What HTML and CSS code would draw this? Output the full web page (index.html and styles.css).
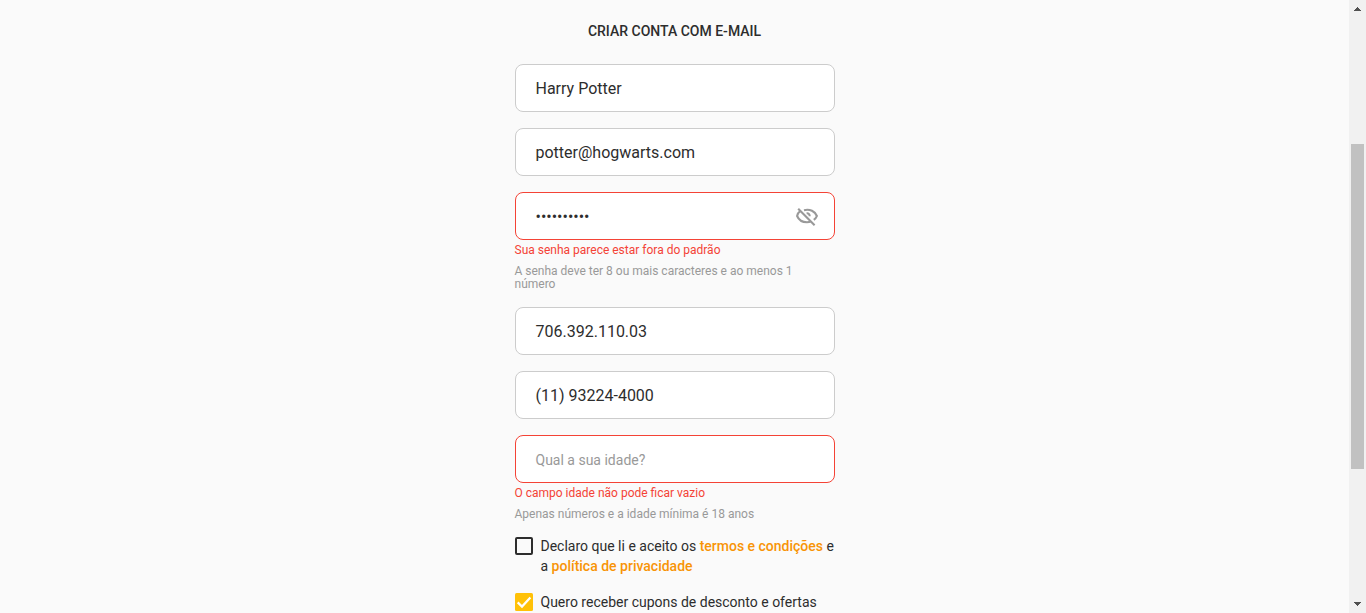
FILE: index.html
```html
<!DOCTYPE html>
<html lang="pt-BR">
<head>
<meta charset="utf-8">
<title>Criar conta</title>
<link rel="stylesheet" href="styles.css">
</head>
<body>
<main class="page">
  <form class="form">
    <h1 class="title">CRIAR CONTA COM E-MAIL</h1>
    <div class="field"><span class="value">Harry Potter</span></div>
    <div class="field"><span class="value">potter@hogwarts.com</span></div>
    <div class="field field-error">
      <span class="value">••••••••••</span>
      <svg class="eye" viewBox="0 0 24 24" width="24" height="24"><path d="M5.2 7.2C3.6 8.4 2.5 10 2.1 12 3.7 15.8 7.5 18.2 12 18.2c1.4 0 2.7-.2 3.9-.7M9 6.2c5.9-1.5 11.1 1.2 12.9 5.8-.6 1.6-1.7 2.9-3.1 3.9M3.2 4.8 19.6 21.2M11.6 9.3c1.9-.2 3.1 1 3.1 2.9"/></svg>
    </div>
    <p class="error">Sua senha parece estar fora do padrão</p>
    <p class="hint">A senha deve ter 8 ou mais caracteres e ao menos 1 número</p>
    <div class="field"><span class="value">706.392.110.03</span></div>
    <div class="field"><span class="value">(11) 93224-4000</span></div>
    <div class="field field-error"><span class="placeholder">Qual a sua idade?</span></div>
    <p class="error">O campo idade não pode ficar vazio</p>
    <p class="hint hint-last">Apenas números e a idade mínima é 18 anos</p>
    <div class="check-row">
      <svg class="box" viewBox="0 0 18 18" width="18" height="18"><rect x="1" y="1" width="16" height="16" rx="1" fill="none" stroke="#2d2d2d" stroke-width="2"/></svg>
      <span>Declaro que li e aceito os <a class="link">termos e condições</a> e a <a class="link">política de privacidade</a></span>
    </div>
    <div class="check-row">
      <svg class="box" viewBox="0 0 18 18" width="18" height="18"><rect width="18" height="18" rx="1.5" fill="#ffc107"/><path d="M2.7 9.4 7 13.6 15.4 4.6" fill="none" stroke="#fff" stroke-width="2.2"/></svg>
      <span>Quero receber cupons de desconto e ofertas</span>
    </div>
  </form>
</main>
<aside class="scrollbar">
  <svg class="arrow" viewBox="0 0 7 4" width="7" height="4"><path d="M3 0h1v1h1v1h1v1h1v1H0V3h1V2h1V1h1z"/></svg>
  <div class="thumb"></div>
  <svg class="arrow" viewBox="0 0 7 4" width="7" height="4"><path d="M0 0h7v1H6v1H5v1H4v1H3V3H2V2H1V1H0z"/></svg>
</aside>
</body>
</html>
```
FILE: styles.css
```css
* { box-sizing: border-box; }
body {
  margin: 0;
  height: 613px;
  overflow: hidden;
  display: flex;
  background: #fafafa;
  color: #2d2d2d;
  font-family: Roboto, "Liberation Sans", sans-serif;
  font-size: 14px;
}
.page { flex: 1; height: 613px; overflow: hidden; }
.form { width: 320px; margin: 0 auto; padding-top: 21px; }
.title {
  margin: 0 0 23px;
  font-size: 14px;
  line-height: 20px;
  font-weight: 500;
  text-align: center;
}
.field {
  display: flex;
  align-items: center;
  justify-content: space-between;
  height: 48px;
  margin-bottom: 16px;
  padding: 0 15px 0 20px;
  border: 1px solid #ccc;
  border-radius: 8px;
  background: #fff;
}
.field-error { margin-bottom: 0; border-color: #f44336; }
.value { padding-top: 2px; font-size: 16px; line-height: 20px; }
.placeholder { padding-top: 2px; color: #999; line-height: 20px; }
.eye { fill: none; stroke: #999; stroke-width: 2.1; }
.error { margin: 4px 0 8px; font-size: 12px; line-height: 13px; color: #f44336; }
.hint { margin: 0 0 16px; padding-right: 30px; font-size: 12px; line-height: 13px; color: #999; }
.hint-last { margin-bottom: 15px; }
.check-row { display: flex; gap: 8px; margin-bottom: 16px; line-height: 20px; }
.box { flex: none; margin-top: 1px; }
.link { color: #f89406; font-weight: 500; }
.scrollbar {
  width: 17px;
  height: 613px;
  padding: 7px 2px;
  display: flex;
  flex-direction: column;
  align-items: center;
  background: #f1f1f1;
}
.thumb { width: 13px; height: 325px; margin: 133px 0 auto; flex: none; background: #c1c1c1; }
.arrow { flex: none; fill: #505050; }
```
